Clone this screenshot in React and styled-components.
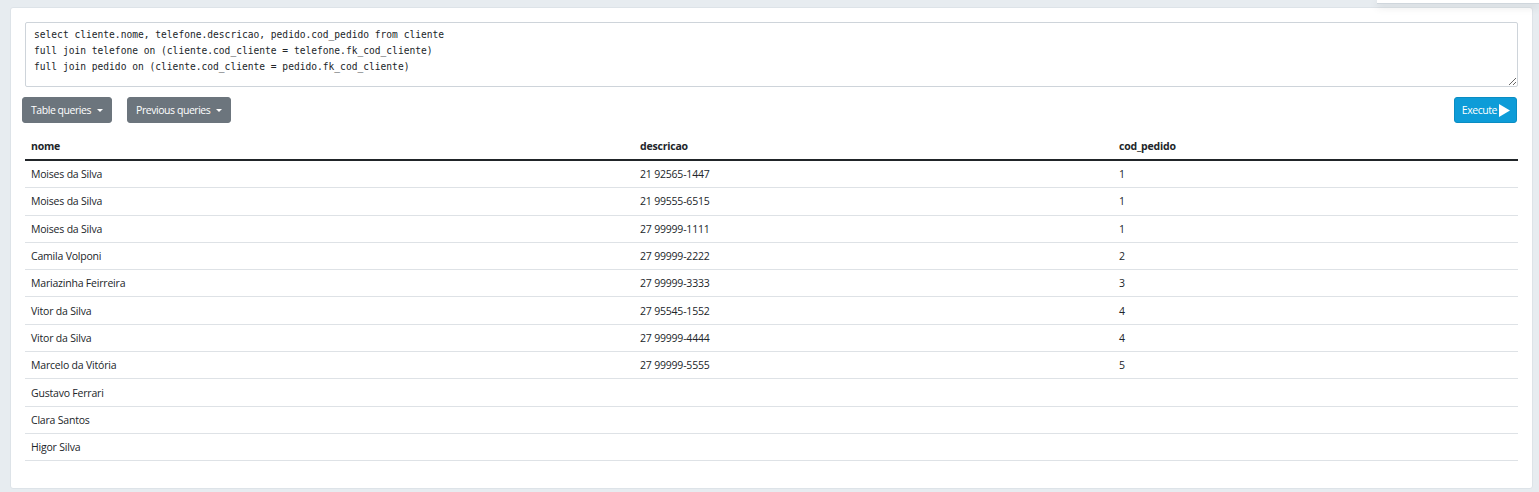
import React from 'react'
import styled, { createGlobalStyle } from 'styled-components'

const GlobalStyle = createGlobalStyle`
  html, body {
    margin: 0;
    padding: 0;
    background: #e7ecf0;
    font-family: 'Segoe UI', 'Open Sans', 'Liberation Sans', sans-serif;
    color: #212529;
  }
`

const query = `select cliente.nome, telefone.descricao, pedido.cod_pedido from cliente
full join telefone on (cliente.cod_cliente = telefone.fk_cod_cliente)
full join pedido on (cliente.cod_cliente = pedido.fk_cod_cliente)`

const rows = [
  ['Moises da Silva', '21 92565-1447', '1'],
  ['Moises da Silva', '21 99555-6515', '1'],
  ['Moises da Silva', '27 99999-1111', '1'],
  ['Camila Volponi', '27 99999-2222', '2'],
  ['Mariazinha Feirreira', '27 99999-3333', '3'],
  ['Vitor da Silva', '27 95545-1552', '4'],
  ['Vitor da Silva', '27 99999-4444', '4'],
  ['Marcelo da Vitória', '27 99999-5555', '5'],
  ['Gustavo Ferrari', '', ''],
  ['Clara Santos', '', ''],
  ['Higor Silva', '', ''],
]

function App() {
  return (
    <Page>
      <GlobalStyle />
      <Popover />
      <Card>
        <Editor defaultValue={query} spellCheck={false} />
        <Toolbar>
          <Dropdown>Table queries <Caret /></Dropdown>
          <Dropdown>Previous queries <Caret /></Dropdown>
          <Execute>
            Execute
            <svg width="11" height="13" viewBox="0 0 11 13">
              <path d="M0 0 L11 6.5 L0 13 Z" fill="#fff" />
            </svg>
          </Execute>
        </Toolbar>
        <Table>
          <colgroup>
            <col style={{ width: 609 }} />
            <col style={{ width: 479 }} />
            <col />
          </colgroup>
          <thead>
            <tr>
              <Th>nome</Th>
              <Th>descricao</Th>
              <Th>cod_pedido</Th>
            </tr>
          </thead>
          <tbody>
            {rows.map((r, i) => (
              <tr key={i}>
                {r.map((c, j) => (
                  <Td key={j}>{c}</Td>
                ))}
              </tr>
            ))}
          </tbody>
        </Table>
      </Card>
    </Page>
  )
}

export default App

const Page = styled.div`
  position: relative;
  min-height: 492px;
  padding: 7px 6px 4px 10px;
  box-sizing: border-box;
`

const Popover = styled.div`
  position: absolute;
  top: 0;
  right: 0;
  width: 162px;
  height: 3px;
  background: #fff;
  border-bottom: 1px solid #cfd6dc;
  box-shadow: 0 3px 8px rgba(0, 0, 0, 0.12);
`

const Card = styled.div`
  background: #fff;
  border: 1px solid #dde3e8;
  border-radius: 3px;
  padding: 14px 14px 27px 14px;
`

const Editor = styled.textarea`
  display: block;
  width: 100%;
  box-sizing: border-box;
  height: 65px;
  border: 1px solid #ced4da;
  border-radius: 2px;
  padding: 4px 8px;
  font-family: Consolas, 'DejaVu Sans Mono', 'Liberation Mono', monospace;
  font-size: 9.6px;
  line-height: 16px;
  color: #212529;
  resize: vertical;
  outline: none;
`

const Toolbar = styled.div`
  display: flex;
  align-items: center;
  gap: 15px;
  margin: 10px 0 10px -3px;
  padding-right: 1px;
`

const Dropdown = styled.button`
  display: flex;
  align-items: center;
  gap: 6px;
  height: 26px;
  padding: 0 8px;
  background: #6c757d;
  border: 1px solid #6c757d;
  border-radius: 3px;
  color: #fff;
  font-family: 'Segoe UI', 'Open Sans', sans-serif;
  font-size: 10.5px;
  letter-spacing: -0.45px;
`

const Caret = styled.span`
  width: 0;
  height: 0;
  border-left: 3px solid transparent;
  border-right: 3px solid transparent;
  border-top: 3px solid #fff;
`

const Execute = styled.button`
  margin-left: auto;
  display: flex;
  align-items: center;
  gap: 2px;
  height: 26px;
  padding: 0 6px 0 7px;
  background: #0d9cd8;
  border: 1px solid #0a8cc2;
  border-radius: 3px;
  color: #fff;
  font-family: 'Segoe UI', 'Open Sans', sans-serif;
  font-size: 10.5px;
  letter-spacing: -0.45px;
`

const Table = styled.table`
  width: 100%;
  table-layout: fixed;
  border-collapse: collapse;
  font-size: 10.5px;
  letter-spacing: -0.2px;
`

const Th = styled.th`
  text-align: left;
  font-weight: 700;
  height: 26px;
  padding: 0 6px;
  border-bottom: 2px solid #212529;
`

const Td = styled.td`
  height: 26.3px;
  padding: 0 6px;
  border-bottom: 1px solid #dee2e6;
`
